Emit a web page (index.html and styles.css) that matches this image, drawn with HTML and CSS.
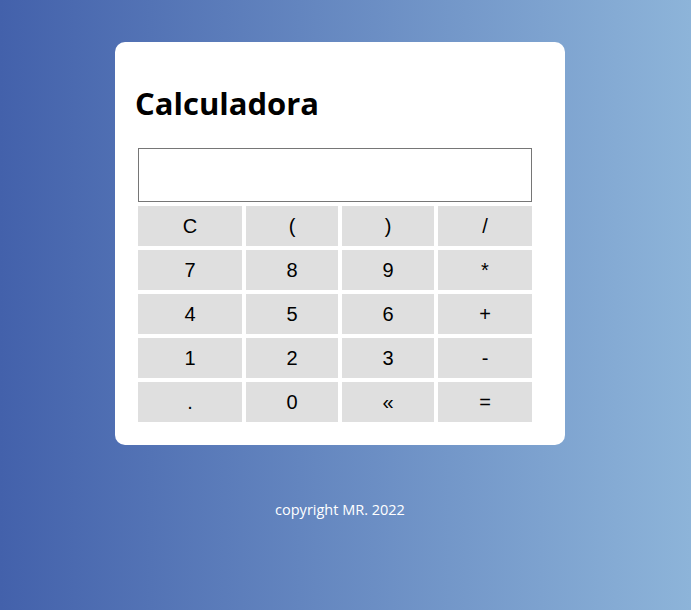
FILE: index.html
```html
<!DOCTYPE html>
<html lang="es">
<head>
<meta charset="utf-8">
<title>Calculadora</title>
<link rel="stylesheet" href="styles.css">
</head>
<body>
<div class="page">
  <div class="card">
    <h1 class="title">Calculadora</h1>
    <div class="calc">
      <input class="display" type="text" value="">
      <div class="keys">
        <button class="key">C</button>
        <button class="key">(</button>
        <button class="key">)</button>
        <button class="key">/</button>
        <button class="key">7</button>
        <button class="key">8</button>
        <button class="key">9</button>
        <button class="key">*</button>
        <button class="key">4</button>
        <button class="key">5</button>
        <button class="key">6</button>
        <button class="key">+</button>
        <button class="key">1</button>
        <button class="key">2</button>
        <button class="key">3</button>
        <button class="key">-</button>
        <button class="key">.</button>
        <button class="key">0</button>
        <button class="key">«</button>
        <button class="key">=</button>
      </div>
    </div>
  </div>
  <p class="footer">copyright MR. 2022</p>
</div>
</body>
</html>
```
FILE: styles.css
```css
html, body {
  margin: 0;
  height: 100%;
}
body {
  background: linear-gradient(to right, #4361ab, #8db4d9);
  font-family: "Open Sans", sans-serif;
}
.page {
  width: 680px;
  display: flex;
  flex-direction: column;
  align-items: center;
  padding-top: 42px;
}
.card {
  width: 450px;
  box-sizing: border-box;
  background: #fff;
  border-radius: 10px;
  padding: 39px 30px 23px 20px;
}
.title {
  margin: 0 0 23px 0;
  font-size: 31px;
  line-height: 44px;
  font-weight: 700;
  color: #000;
}
.calc {
  display: flex;
  flex-direction: column;
  gap: 4px;
  padding-left: 3px;
  width: 394px;
}
.display {
  box-sizing: border-box;
  width: 394px;
  height: 54px;
  border: 1px solid #767676;
  margin: 0;
  padding: 0 4px;
  font-size: 20px;
  background: #fff;
  outline: none;
}
.keys {
  display: grid;
  grid-template-columns: 104px 92px 92px 94px;
  grid-auto-rows: 40px;
  gap: 4px;
}
.key {
  border: none;
  margin: 0;
  padding: 0;
  background: #dfdfdf;
  font-family: "Liberation Sans", Arial, sans-serif;
  font-size: 20px;
  color: #000;
}
.footer {
  margin: 55px 0 0 0;
  color: #fff;
  font-size: 14.5px;
  line-height: 20px;
}
```
